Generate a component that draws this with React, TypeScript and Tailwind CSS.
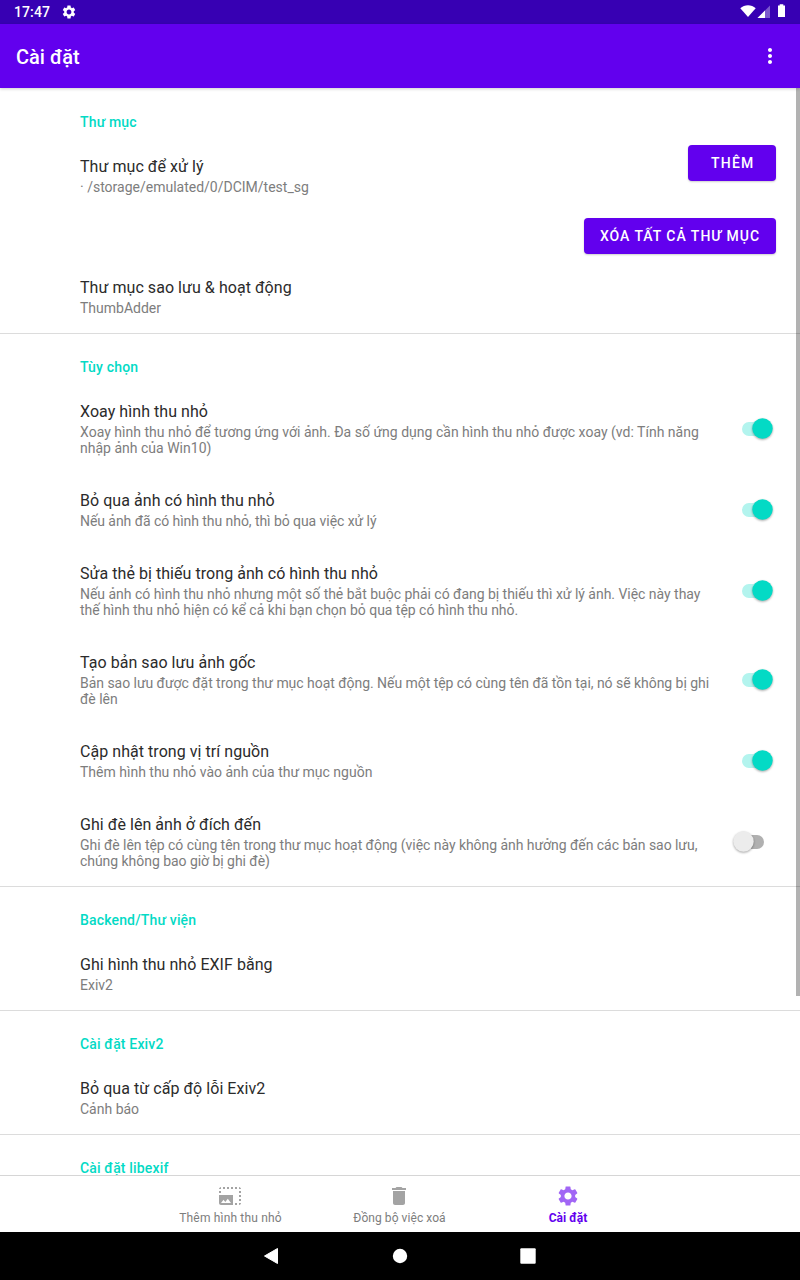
import { MdDelete, MdMoreVert, MdPhotoSizeSelectLarge, MdSettings } from 'react-icons/md';
import type { ReactNode } from 'react';

function StatusBar() {
  return (
    <div className="flex h-6 shrink-0 items-center bg-[#3700b3] pl-3.5 text-white">
      <span className="text-[14px] leading-6 font-medium tracking-[0.1px]">17:47</span>
      <MdSettings className="ml-[10.5px] size-4" />
      <svg className="ml-auto h-6 w-[60px]" viewBox="0 0 60 24" fill="#fff">
        <path d="M8 17 .3 8.2C4.500 4.300 11.500 4.300 15.700 8.200Z" />
        <path d="M17.500 18 30 5.500V18Z" opacity=".35" />
        <path d="M17.500 18 25 10.500V18Z" />
        <path d="M39.700 4.200h3.600v1.300H45V17h-7V5.500h1.700Z" />
      </svg>
    </div>
  );
}

function AppBar() {
  return (
    <header className="relative z-10 flex h-16 shrink-0 items-center justify-between bg-[#6200ee] pr-[18px] pl-4 text-white shadow-[0_1px_3px_rgba(0,0,0,0.2)]">
      <h1 className="pt-0.5 text-[20px] leading-6 font-medium">Cài đặt</h1>
      <MdMoreVert className="size-6" />
    </header>
  );
}

function Category({ title, first = false }: { title: string; first?: boolean }) {
  return (
    <div className={`h-[51px] shrink-0 pl-20 ${first ? '' : 'shadow-[inset_0_1px_0_#dcdcdc]'}`}>
      <h2 className="pt-6 text-[14px] leading-5 font-medium tracking-[0.16px] text-[#03dac5]">{title}</h2>
    </div>
  );
}

type PreferenceProps = { title: string; summary: string[]; tracking?: string; children?: ReactNode };

function Preference({ title, summary, tracking = '', children }: PreferenceProps) {
  return (
    <div className="flex shrink-0 pl-20">
      <div className="min-w-0 flex-1 pt-[17px] pb-[17px]">
        <div className="text-[16px] leading-[22px] tracking-[0.05px] text-[#2b2b2b]">{title}</div>
        <div className={`pt-px text-[14px] leading-4 text-[#7d7d7d] ${tracking}`}>
          {summary.map((line) => (
            <div key={line} className="whitespace-nowrap">{line}</div>
          ))}
        </div>
      </div>
      {children}
    </div>
  );
}

function Toggle({ on }: { on: boolean }) {
  return (
    <svg className="mr-6 w-12 shrink-0 self-center overflow-visible" height="29" viewBox="0 0 48 29">
      {on ? (
        <>
          <rect x="14" y="8" width="27" height="14" rx="7" fill="#b3f4ee" />
          <circle className="drop-shadow-[0_1px_1px_rgba(0,0,0,0.35)]" cx="34.500" cy="14.500" r="10.200" fill="#03dac5" />
        </>
      ) : (
        <>
          <rect x="9" y="8" width="27" height="14" rx="7" fill="#b0b0b0" />
          <circle className="drop-shadow-[0_1px_1px_rgba(0,0,0,0.35)]" cx="15.500" cy="14.500" r="10.200" fill="#ececec" />
        </>
      )}
    </svg>
  );
}

function Button({ children, className }: { children: ReactNode; className: string }) {
  return (
    <button className={`mt-1.5 mr-6 h-9 shrink-0 rounded bg-[#6200ee] text-center text-[14px] leading-5 font-medium whitespace-nowrap text-white shadow-[0_1px_2px_rgba(0,0,0,0.2)] ${className}`}>
      {children}
    </button>
  );
}

const options = [
  { title: 'Xoay hình thu nhỏ', on: true, tracking: 'tracking-[0.01px]', summary: ['Xoay hình thu nhỏ để tương ứng với ảnh. Đa số ứng dụng cần hình thu nhỏ được xoay (vd: Tính năng', 'nhập ảnh của Win10)'] },
  { title: 'Bỏ qua ảnh có hình thu nhỏ', on: true, tracking: 'tracking-[-0.06px]', summary: ['Nếu ảnh đã có hình thu nhỏ, thì bỏ qua việc xử lý'] },
  { title: 'Sửa thẻ bị thiếu trong ảnh có hình thu nhỏ', on: true, tracking: 'tracking-[-0.025px]', summary: ['Nếu ảnh có hình thu nhỏ nhưng một số thẻ bắt buộc phải có đang bị thiếu thì xử lý ảnh. Việc này thay', 'thế hình thu nhỏ hiện có kể cả khi bạn chọn bỏ qua tệp có hình thu nhỏ.'] },
  { title: 'Tạo bản sao lưu ảnh gốc', on: true, tracking: 'tracking-[-0.04px]', summary: ['Bản sao lưu được đặt trong thư mục hoạt động. Nếu một tệp có cùng tên đã tồn tại, nó sẽ không bị ghi', 'đè lên'] },
  { title: 'Cập nhật trong vị trí nguồn', on: true, tracking: '', summary: ['Thêm hình thu nhỏ vào ảnh của thư mục nguồn'] },
  { title: 'Ghi đè lên ảnh ở đích đến', on: false, tracking: 'tracking-[-0.045px]', summary: ['Ghi đè lên tệp có cùng tên trong thư mục hoạt động (việc này không ảnh hưởng đến các bản sao lưu,', 'chúng không bao giờ bị ghi đè)'] },
];

function BottomNav() {
  return (
    <nav className="flex h-[57px] shrink-0 border-t border-[#d6d6d6] bg-white pl-[145.5px] text-[12px] leading-4 text-[#7d7d7d]">
      <div className="flex w-[169px] flex-col items-center pt-2">
        <MdPhotoSizeSelectLarge className="size-6 text-[#a3a3a3]" />
        <span className="mt-0.5 pl-px tracking-[0.17px]">Thêm hình thu nhỏ</span>
      </div>
      <div className="flex w-[169px] flex-col items-center pt-2">
        <MdDelete className="size-6 text-[#a3a3a3]" />
        <span className="mt-0.5 pl-px tracking-[0.06px]">Đồng bộ việc xoá</span>
      </div>
      <div className="flex w-[169px] flex-col items-center pt-2 text-[#6200ee]">
        <MdSettings className="size-6 text-[#a166f5]" />
        <span className="mt-0.5 font-bold">Cài đặt</span>
      </div>
    </nav>
  );
}

function SystemNav() {
  return (
    <div className="flex h-12 shrink-0 items-center justify-center bg-black">
      <svg width="300" height="48" viewBox="0 0 300 48" fill="#fff">
        <path d="M14.500 24 27.500 16.500V31.500Z" stroke="#fff" strokeWidth="1" strokeLinejoin="round" />
        <circle cx="150" cy="24" r="7.200" />
        <rect x="270.300" y="16.300" width="15.400" height="15.400" rx="1" />
      </svg>
    </div>
  );
}

export default function App() {
  return (
    <div className="flex h-[1280px] w-[800px] flex-col overflow-hidden bg-white font-[Roboto,sans-serif]">
      <StatusBar />
      <AppBar />
      <main className="relative flex min-h-0 flex-1 flex-col overflow-hidden">
        <Category title="Thư mục" first />
        <Preference title="Thư mục để xử lý" summary={['· /storage/emulated/0/DCIM/test_sg']}>
          <Button className="w-[88px] pl-[1.5px] tracking-[1.25px]">THÊM</Button>
        </Preference>
        <div className="flex h-12 shrink-0 justify-end">
          <Button className="w-48 tracking-[0.98px]">XÓA TẤT CẢ THƯ MỤC</Button>
        </div>
        <Preference title="Thư mục sao lưu & hoạt động" summary={['ThumbAdder']} />
        <Category title="Tùy chọn" />
        {options.map((option) => (
          <Preference key={option.title} title={option.title} summary={option.summary} tracking={option.tracking}>
            <Toggle on={option.on} />
          </Preference>
        ))}
        <Category title="Backend/Thư viện" />
        <Preference title="Ghi hình thu nhỏ EXIF bằng" summary={['Exiv2']} />
        <Category title="Cài đặt Exiv2" />
        <Preference title="Bỏ qua từ cấp độ lỗi Exiv2" summary={['Cảnh báo']} />
        <Category title="Cài đặt libexif" />
        <div className="absolute top-0 right-0 h-[908px] w-1 bg-black/30" />
      </main>
      <BottomNav />
      <SystemNav />
    </div>
  );
}
